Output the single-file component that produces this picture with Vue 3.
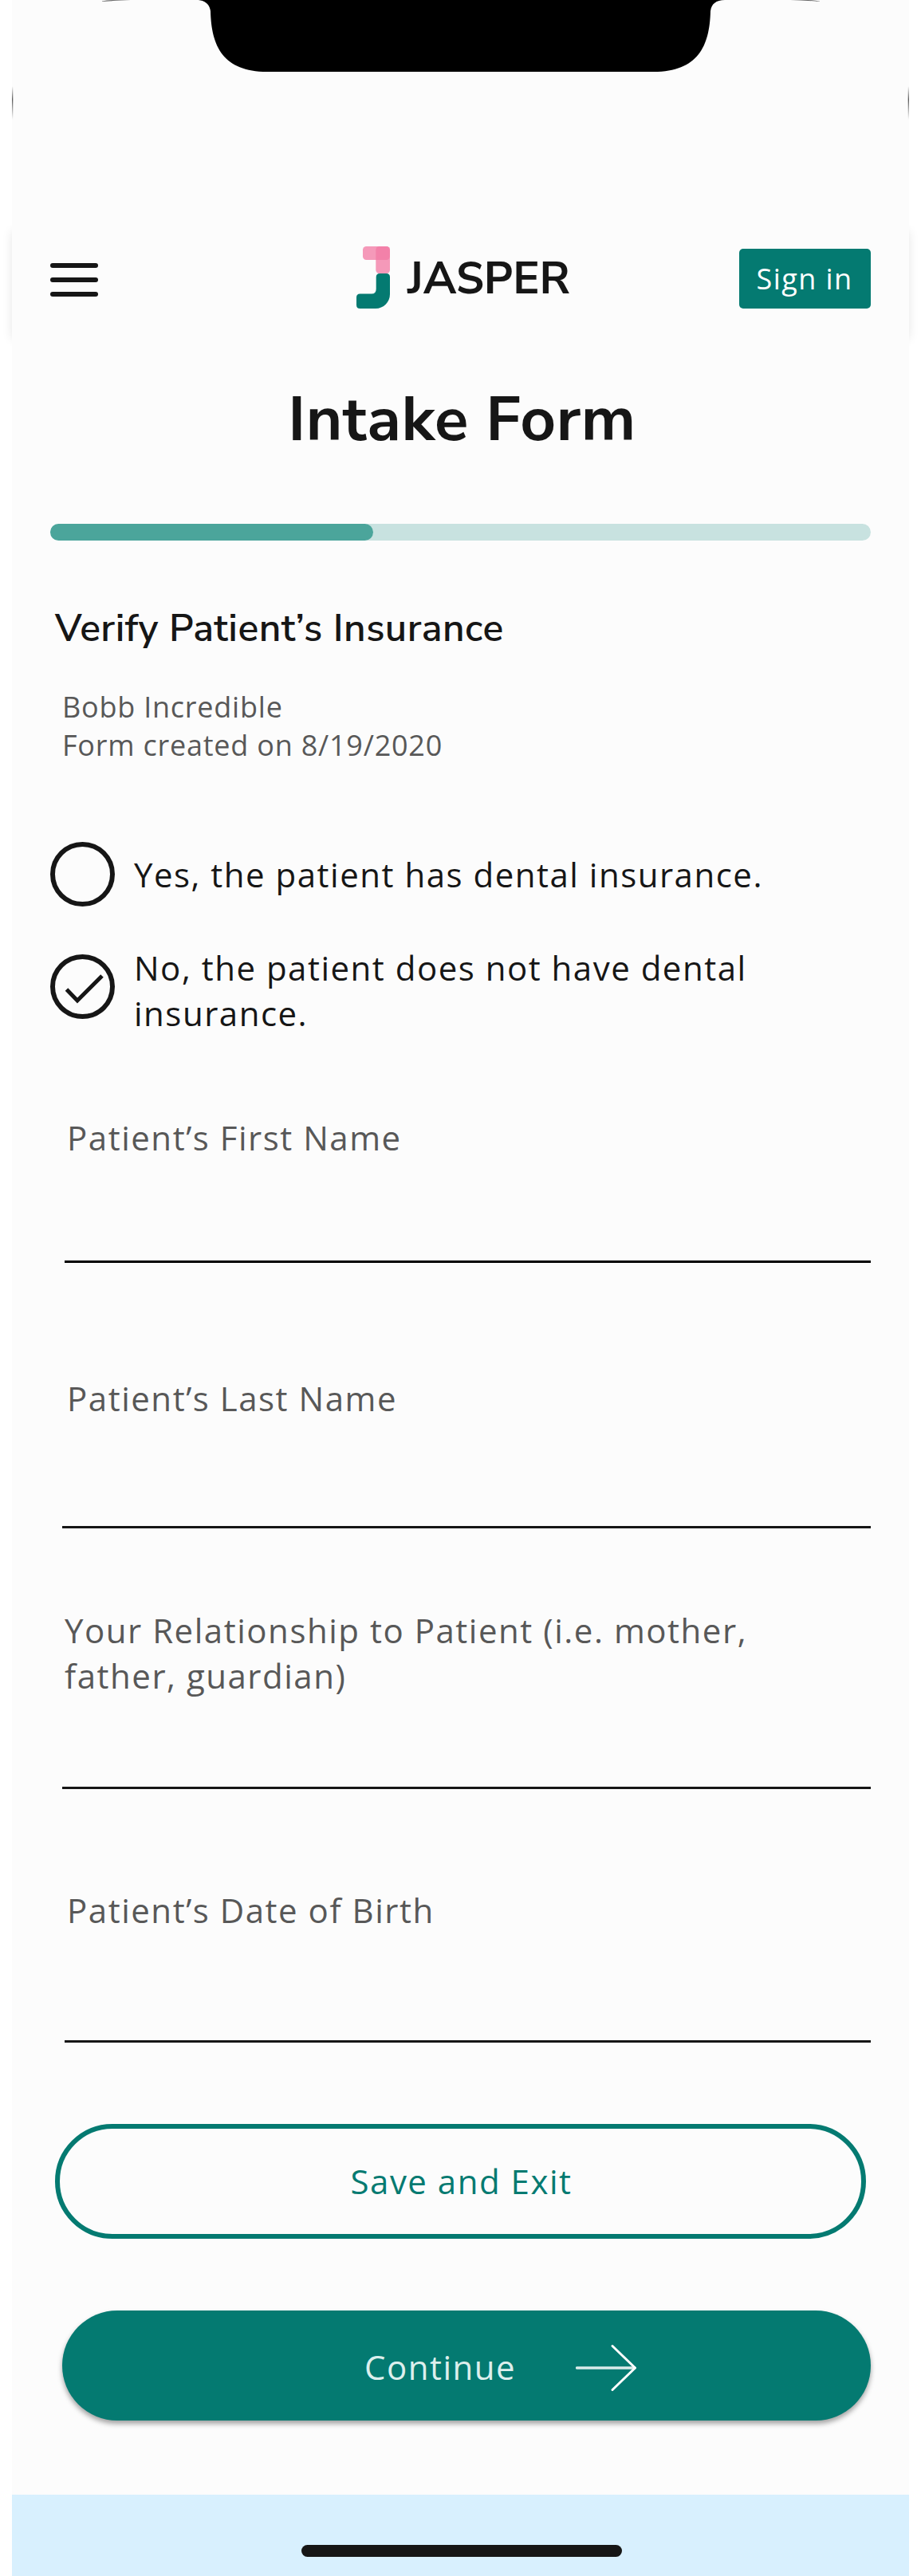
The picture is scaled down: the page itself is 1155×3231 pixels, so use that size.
<script setup>
import { ref } from 'vue'

const progress = 39.4
const hasInsurance = ref(false)
const options = [
  { value: true, label: 'Yes, the patient has dental insurance.' },
  { value: false, label: 'No, the patient does not have dental insurance.' },
]
const fields = [
  { id: 'first', label: 'Patient’s First Name' },
  { id: 'last', label: 'Patient’s Last Name' },
  { id: 'relation', label: 'Your Relationship to Patient (i.e. mother, father, guardian)' },
  { id: 'birth', label: 'Patient’s Date of Birth' },
]
</script>

<template>
  <div class="screen">
    <div class="status">
      <svg class="notch" width="1125" height="150" viewBox="15 0 1125 150">
        <defs>
          <linearGradient id="edge" x1="0" y1="0" x2="0" y2="1">
            <stop offset="0" stop-color="#000" stop-opacity="0" />
            <stop offset=".4" stop-color="#000" stop-opacity=".65" />
            <stop offset="1" stop-color="#000" stop-opacity="0" />
          </linearGradient>
        </defs>
        <path d="M246 0C257 0 263 5 264 14C265 58 280 90 335 90H820C875 90 890 58 891 14C892 5 898 0 909 0Z" />
        <path d="M125 2Q134 0 142 0H164Q146 0.4 125 2Z" opacity=".6" />
        <path d="M1030 2Q1021 0 1013 0H991Q1009 0.4 1030 2Z" opacity=".6" />
        <rect x="15" y="108" width="1.3" height="42" fill="url(#edge)" />
        <rect x="1138.7" y="108" width="1.3" height="42" fill="url(#edge)" />
      </svg>
    </div>

    <header class="header">
      <button class="menu" aria-label="Menu"><i></i><i></i><i></i></button>
      <div class="logo">
        <svg width="42" height="78" viewBox="0 0 42 78">
          <rect x="8" y="0" width="34" height="17" rx="4.5" fill="#f27aa4" fill-opacity=".77" />
          <rect x="24.3" y="0" width="17.7" height="34" rx="4.5" fill="#f27aa4" fill-opacity=".77" />
          <path d="M24.7 38.5Q24.7 34 29.2 34H37.5Q42 34 42 38.5V60C42 70 34 78 24 78H4.5Q0 78 0 73.5V64Q0 59.5 4.5 59.5H19Q24.7 59.5 24.7 53.5Z" fill="#047a71" />
        </svg>
        <span>JASPER</span>
      </div>
      <button class="signin">Sign in</button>
    </header>

    <main class="content">
      <h1>Intake Form</h1>
      <div class="track"><div class="fill" :style="{ width: progress + '%' }"></div></div>
      <h2>Verify Patient’s Insurance</h2>
      <div class="meta">
        <div>Bobb Incredible</div>
        <div>Form created on 8/19/2020</div>
      </div>

      <div class="options">
        <div v-for="o in options" :key="o.label" class="option" :class="{ tall: !o.value }" @click="hasInsurance = o.value">
          <svg class="radio" width="81" height="81" viewBox="0 0 81 81" fill="none" stroke="#161616">
            <circle cx="40.5" cy="40.5" r="37.5" stroke-width="6" />
            <path v-if="hasInsurance === o.value" d="M20.5 44L34 58L65 27" stroke-width="5" />
          </svg>
          <span>{{ o.label }}</span>
        </div>
      </div>

      <div v-for="f in fields" :key="f.id" class="field" :class="f.id">
        <label>{{ f.label }}</label>
      </div>

      <button class="save">Save and Exit</button>
      <button class="continue">
        <span>Continue</span>
        <svg width="78" height="60" viewBox="0 0 78 60" fill="none" stroke="#fff" stroke-width="3" stroke-linecap="round" stroke-linejoin="round">
          <path d="M1.5 30H74" stroke-width="3.4" stroke-opacity=".85" />
          <path d="M46 2.5L74.5 30L46 57.5" />
        </svg>
      </button>
    </main>

    <footer class="footer"><div class="home"></div></footer>
  </div>
</template>

<style>
html,
body {
  background: #fff;
}
</style>

<style scoped>
.screen {
  width: 1125px;
  height: 3231px;
  margin: 0 auto;
  display: flex;
  flex-direction: column;
  background: #fcfcfc;
  color: #161616;
  font: 400 42px/57px "Open Sans", "Noto Sans", sans-serif;
  letter-spacing: 1.5px;
}
button {
  margin: 0;
  padding: 0;
  border: 0;
  background: none;
  font: inherit;
  letter-spacing: inherit;
}
svg {
  display: block;
  flex: none;
}
.status {
  height: 282px;
}
.header {
  height: 135px;
  padding: 0 48px;
  display: grid;
  grid-template-columns: 384px 1fr 165px;
  align-items: center;
  background: #fcfcfc;
  box-shadow: 0 8px 12px rgba(0, 0, 0, 0.1);
  clip-path: inset(0 -20px -20px -20px);
}
.menu {
  width: 60px;
  margin-top: 3px;
  display: flex;
  flex-direction: column;
  gap: 12px;
}
.menu i {
  height: 6px;
  border-radius: 3px;
  background: #161616;
}
.logo {
  display: flex;
  align-items: center;
  gap: 22px;
  margin-bottom: 3px;
  font: 700 56px/78px "Nunito Sans", Nunito, Lato, sans-serif;
  letter-spacing: -0.2px;
}
.logo span {
  padding-top: 4px;
}
.signin {
  height: 75px;
  padding-right: 1px;
  border-radius: 5px;
  background: #047a71;
  color: #fff;
  font-size: 36px;
  line-height: 75px;
  letter-spacing: 1.4px;
}
.content {
  position: relative;
  flex: 1;
  padding: 60px 48px 0;
  background: #fcfcfc;
}
h1 {
  margin: 0;
  padding-left: 4px;
  text-align: center;
  font: 700 78px/100px "Nunito Sans", Nunito, Lato, sans-serif;
  letter-spacing: 0.5px;
}
.track {
  height: 21px;
  margin-top: 80px;
  border-radius: 11px;
  background: #c8e2e0;
}
.fill {
  height: 21px;
  border-radius: 11px;
  background: #4ba59b;
}
h2 {
  margin: 80px 0 0 6px;
  font: 600 48px/60px "Nunito Sans", Nunito, Lato, sans-serif;
  letter-spacing: 0.45px;
}
.meta {
  margin: 45px 0 0 15px;
  color: #585858;
  font-size: 36px;
  line-height: 48px;
  letter-spacing: 0.77px;
}
.options {
  margin-top: 97px;
  display: flex;
  flex-direction: column;
  gap: 48px;
}
.option {
  display: flex;
  align-items: center;
  gap: 24px;
}
.option span {
  width: 840px;
}
.tall {
  align-items: flex-start;
}
.tall .radio {
  margin-top: 12px;
}
.field {
  box-sizing: border-box;
  border-bottom: 3px solid #161616;
  color: #585858;
  letter-spacing: 1.52px;
}
.field label {
  display: block;
  width: 900px;
}
.first {
  height: 186px;
  margin: 99px 0 0 18px;
  padding-left: 3px;
  border-color: #000;
}
.last {
  height: 192px;
  margin: 141px 0 0 15px;
  padding-left: 6px;
}
.relation {
  height: 228px;
  margin: 99px 0 0 15px;
  padding-left: 3px;
}
.birth {
  height: 195px;
  margin: 123px 0 0 18px;
  padding-left: 3px;
}
.save {
  display: block;
  box-sizing: border-box;
  width: 1017px;
  height: 144px;
  margin: 102px 0 0 6px;
  padding: 0 0 2px 2px;
  border: 6px solid #047a71;
  border-radius: 72px;
  color: #047a71;
}
.continue {
  box-sizing: border-box;
  width: 1014px;
  height: 138px;
  margin: 90px 0 0 15px;
  padding-left: 379px;
  display: flex;
  align-items: center;
  border-radius: 69px;
  background: #047a71;
  color: #dcefed;
  box-shadow: 0 4px 6px rgba(0, 0, 0, 0.36);
  text-align: left;
}
.continue span {
  width: 265px;
  padding-top: 2px;
}
.continue svg {
  margin-top: 6px;
}
.footer {
  height: 102px;
  display: flex;
  justify-content: center;
  background: #d8f0fe;
}
.home {
  width: 402px;
  height: 15px;
  margin: 63px 0 0 3px;
  border-radius: 8px;
  background: #161616;
}
</style>
